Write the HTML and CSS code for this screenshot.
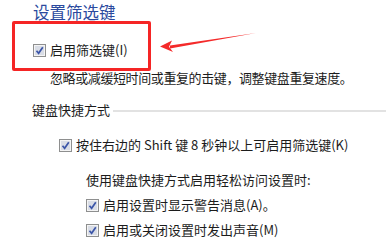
FILE: index.html
```html
<!DOCTYPE html>
<html lang="zh-CN">
<head>
<meta charset="utf-8">
<link rel="stylesheet" href="styles.css">
</head>
<body>
<div class="page">
  <h1 class="title">设置筛选键</h1>
  <label class="check row1">
    <svg class="cb" width="13" height="13" viewBox="0 0 13 13"><rect x="0.5" y="0.5" width="12" height="12" fill="#f4f4f4" stroke="#8e8f8f"/><rect x="2" y="2" width="9" height="9" fill="#d9dde6"/><path d="M3.5 6.8 L5.6 9.3 L9.8 3.2" fill="none" stroke="#3b55a8" stroke-width="1.7"/></svg>
    <span>启用筛选键(I)</span>
  </label>
  <p class="desc">忽略或减缓短时间或重复的击键，调整键盘重复速度。</p>
  <div class="section"><span>键盘快捷方式</span><i class="rule"></i></div>
  <label class="check row2">
    <svg class="cb" width="13" height="13" viewBox="0 0 13 13"><rect x="0.5" y="0.5" width="12" height="12" fill="#f4f4f4" stroke="#8e8f8f"/><rect x="2" y="2" width="9" height="9" fill="#d9dde6"/><path d="M3.5 6.8 L5.6 9.3 L9.8 3.2" fill="none" stroke="#3b55a8" stroke-width="1.7"/></svg>
    <span>按住右边的 Shift 键 8 秒钟以上可启用筛选键(K)</span>
  </label>
  <p class="sub">使用键盘快捷方式启用轻松访问设置时:</p>
  <label class="check row3">
    <svg class="cb" width="13" height="13" viewBox="0 0 13 13"><rect x="0.5" y="0.5" width="12" height="12" fill="#f4f4f4" stroke="#8e8f8f"/><rect x="2" y="2" width="9" height="9" fill="#d9dde6"/><path d="M3.5 6.8 L5.6 9.3 L9.8 3.2" fill="none" stroke="#3b55a8" stroke-width="1.7"/></svg>
    <span>启用设置时显示警告消息(A)。</span>
  </label>
  <label class="check row4">
    <svg class="cb" width="13" height="13" viewBox="0 0 13 13"><rect x="0.5" y="0.5" width="12" height="12" fill="#f4f4f4" stroke="#8e8f8f"/><rect x="2" y="2" width="9" height="9" fill="#d9dde6"/><path d="M3.5 6.8 L5.6 9.3 L9.8 3.2" fill="none" stroke="#3b55a8" stroke-width="1.7"/></svg>
    <span>启用或关闭设置时发出声音(M)</span>
  </label>

  <div class="highlight"></div>
  <svg class="arrow" width="110" height="24" viewBox="0 0 110 24">
    <path d="M98 2 L12 14.5 L12 17.5 Z" fill="#f42a2a"/>
    <path d="M2 15.5 L14 9.5 L11 15.8 L15 21 Z" fill="#f42a2a"/>
  </svg>
</div>
</body>
</html>
```
FILE: styles.css
```css
* { box-sizing: border-box; }
html, body { margin: 0; padding: 0; background: #fff; }
body {
  width: 386px;
  height: 250px;
  overflow: hidden;
  font-family: "Noto Sans CJK SC", "Noto Sans", sans-serif;
  font-size: 13px;
  color: #1c1c1c;
}
.page {
  position: relative;
  display: flex;
  flex-direction: column;
  align-items: flex-start;
  height: 250px;
}
.title {
  margin: 0 0 0 33px;
  height: 24px;
  line-height: 24px;
  font-size: 16.5px;
  font-weight: normal;
  color: #2b4a9e;
}
.check {
  display: flex;
  align-items: center;
  gap: 4px;
  height: 20px;
  line-height: 20px;
}
.cb { flex: none; display: block; }
.row1 { margin: 16px 0 0 33px; }
.desc {
  margin: 8px 0 0 50px;
  height: 20px;
  line-height: 20px;
  letter-spacing: -0.4px;
}
.section {
  display: flex;
  align-items: center;
  align-self: stretch;
  margin: 12px 0 0 32px;
  height: 20px;
  line-height: 20px;
  gap: 3px;
}
.rule {
  flex: 1;
  height: 2px;
  margin-top: 2px;
  background: #e2e2e2;
}
.row2 { margin: 15px 0 0 59px; }
.sub {
  margin: 15px 0 0 86px;
  height: 20px;
  line-height: 20px;
}
.row3 { margin: 5px 0 0 86px; }
.row4 { margin: 5px 0 0 86px; }

.highlight {
  position: absolute;
  left: 12px;
  top: 21px;
  width: 139px;
  height: 50px;
  border: 3px solid #f52525;
  border-radius: 2px;
}
.arrow {
  position: absolute;
  left: 158px;
  top: 31px;
}
```
